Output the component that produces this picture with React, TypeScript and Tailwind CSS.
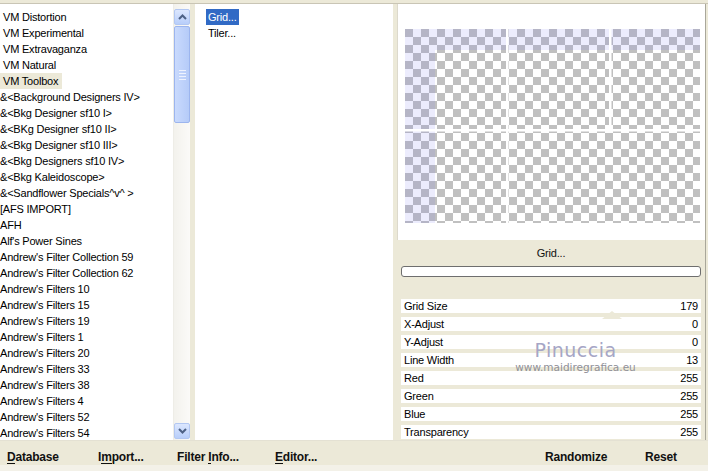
import React from "react";

const leftItems: { t: string; indent?: boolean; sel?: boolean }[] = [
  { t: "VM Distortion", indent: true },
  { t: "VM Experimental", indent: true },
  { t: "VM Extravaganza", indent: true },
  { t: "VM Natural", indent: true },
  { t: "VM Toolbox", indent: true, sel: true },
  { t: "&<Background Designers IV>" },
  { t: "&<Bkg Designer sf10 I>" },
  { t: "&<BKg Designer sf10 II>" },
  { t: "&<Bkg Designer sf10 III>" },
  { t: "&<Bkg Designers sf10 IV>" },
  { t: "&<Bkg Kaleidoscope>" },
  { t: "&<Sandflower Specials^v^ >" },
  { t: "[AFS IMPORT]" },
  { t: "AFH" },
  { t: "Alf's Power Sines" },
  { t: "Andrew's Filter Collection 59" },
  { t: "Andrew's Filter Collection 62" },
  { t: "Andrew's Filters 10" },
  { t: "Andrew's Filters 15" },
  { t: "Andrew's Filters 19" },
  { t: "Andrew's Filters 1" },
  { t: "Andrew's Filters 20" },
  { t: "Andrew's Filters 33" },
  { t: "Andrew's Filters 38" },
  { t: "Andrew's Filters 4" },
  { t: "Andrew's Filters 52" },
  { t: "Andrew's Filters 54" },
];

const params: [string, string][] = [
  ["Grid Size", "179"],
  ["X-Adjust", "0"],
  ["Y-Adjust", "0"],
  ["Line Width", "13"],
  ["Red", "255"],
  ["Green", "255"],
  ["Blue", "255"],
  ["Transparency", "255"],
];

function Chevron({ down }: { down?: boolean }) {
  return (
    <svg width="9" height="6" viewBox="0 0 9 6">
      <path
        d={down ? "M1 1 L4.5 4.5 L8 1" : "M1 5 L4.5 1.5 L8 5"}
        fill="none"
        stroke="#4D6185"
        strokeWidth="2"
      />
    </svg>
  );
}

function ScrollButton({ down }: { down?: boolean }) {
  return (
    <div className="h-[16px] w-[16px] mx-auto rounded-[2px] border border-[#B2C7F2] bg-gradient-to-b from-[#DCE7FE] to-[#B8CEFA] flex items-center justify-center">
      <Chevron down={down} />
    </div>
  );
}

function Checker() {
  return (
    <svg width="295" height="194" viewBox="0 0 295 194" className="block">
      <defs>
        <pattern id="chk" width="16" height="16" patternUnits="userSpaceOnUse">
          <rect width="16" height="16" fill="#FFFFFF" />
          <rect x="0" y="0" width="8" height="8" fill="#C0C0C0" />
          <rect x="8" y="8" width="8" height="8" fill="#C0C0C0" />
        </pattern>
      </defs>
      <rect width="295" height="194" fill="url(#chk)" />
      <rect x="0" y="0" width="295" height="21" fill="#6E6EF0" opacity="0.13" />
      <rect x="0" y="21" width="30" height="173" fill="#6E6EF0" opacity="0.13" />
      <rect x="101" y="0" width="2.5" height="194" fill="#FFFFFF" />
      <rect x="204" y="0" width="2.5" height="100" fill="#FFFFFF" />
      <rect x="0" y="100" width="295" height="2.5" fill="#FFFFFF" />
    </svg>
  );
}

function BottomBtn({ pre, u, post, className }: { pre: string; u: string; post: string; className?: string }) {
  return (
    <span className={"font-bold text-[12px] leading-[14px] text-[#111] whitespace-nowrap " + (className ?? "")}>
      {pre}
      {u ? <span className="inline-block border-b border-[#111] leading-[12px]">{u}</span> : null}
      {post}
    </span>
  );
}

export default function App() {
  return (
    <div className="w-[708px] h-[471px] bg-[#ECE9D8] flex flex-col overflow-hidden font-['Liberation_Sans',Arial,sans-serif] text-[11px] tracking-[-0.2px] text-black">
      {/* top strip */}
      <div className="h-[4px] shrink-0 border-b border-[#C9C5B5] bg-[#ECE9D8]" />

      {/* main */}
      <div className="h-[436px] flex shrink-0">
        {/* left list */}
        <div className="w-[173px] bg-white pt-[5px] overflow-hidden">
          {leftItems.map((it, i) => (
            <div key={i} className="h-[16px] leading-[16px] whitespace-nowrap">
              <span className={(it.indent ? "pl-[3px] " : "") + (it.sel ? "bg-[#ECE9D8] pr-[4px] inline-block h-[16px]" : "")}>
                {it.t}
              </span>
            </div>
          ))}
        </div>
        {/* scrollbar */}
        <div className="w-[17px] bg-gradient-to-r from-[#F3F2ED] to-[#FBFAF8] pt-[5px] pb-[1px] flex flex-col border-l border-[#EEEDE7]">
          <ScrollButton />
          <div className="h-[97px] w-[16px] mx-auto mt-[1px] rounded-[2px] border border-[#9CB5EE] bg-gradient-to-r from-[#C9DAFD] to-[#B5CBF8] flex flex-col items-center justify-center gap-[2px]">
            <div className="w-[7px] h-[1px] bg-[#EEF3FE]" />
            <div className="w-[7px] h-[1px] bg-[#EEF3FE]" />
            <div className="w-[7px] h-[1px] bg-[#EEF3FE]" />
            <div className="w-[7px] h-[1px] bg-[#EEF3FE]" />
          </div>
          <div className="flex-1" />
          <ScrollButton down />
        </div>
        <div className="w-[5px]" />
        {/* middle list */}
        <div className="w-[198px] bg-white pt-[5px] pl-[11px]">
          <div className="h-[16px] leading-[16px]">
            <span className="bg-[#316AC5] text-white inline-block h-[16px] px-[2px]">Grid...</span>
          </div>
          <div className="h-[16px] leading-[16px] pl-[2px]">Tiler...</div>
        </div>
        <div className="w-[4px]" />
        {/* right panel */}
        <div className="w-[309px] flex flex-col border-r border-[#A9A79A] relative">
          <div className="h-[236px] bg-white border-l border-[#DCD9CC] pl-[7px] pt-[25px]">
            <Checker />
          </div>
          <div className="h-[58px] flex flex-col px-[4px]">
            <div className="h-[26px] flex items-center justify-center text-[#111]">Grid...</div>
            <div className="h-[11px] rounded-[3px] border border-[#6E6E6E] bg-white" />
          </div>
          <div className="flex flex-col px-[4px]">
            {params.map(([k, v], i) => (
              <div key={k} className={"h-[14px] bg-white flex items-center justify-between px-[3px] leading-[14px] " + (i === 0 ? "mt-[1px]" : "mt-[4px]")}>
                <span>{k}</span>
                <span>{v}</span>
              </div>
            ))}
          </div>
          {/* slider pointer */}
          <svg className="absolute left-[205px] top-[307px]" width="20" height="8" viewBox="0 0 20 8">
            <path d="M0 8 L10 0 L20 8 Z" fill="#ECE9D8" />
          </svg>
          {/* watermark */}
          <div className="absolute left-[116px] top-[335px] w-[125px] flex flex-col items-center pointer-events-none">
            <span className="font-['DejaVu_Sans',sans-serif] text-[19px] leading-[22px] tracking-[0.5px] text-[#A6A6C6]">Pinuccia</span>
            <span className="font-['DejaVu_Sans',sans-serif] text-[10.5px] leading-[12px] text-[#909098] tracking-[0px]">www.maidiregrafica.eu</span>
          </div>
        </div>
        <div className="w-[2px]" />
      </div>

      {/* bottom bar */}
      <div className="flex-1 relative border-t border-[#E4E1D3]">
        <BottomBtn pre="" u="D" post="atabase" className="absolute left-[7px] top-[9px]" />
        <BottomBtn pre="I" u="m" post="port..." className="absolute left-[98px] top-[9px]" />
        <BottomBtn pre="Filter " u="I" post="nfo..." className="absolute left-[177px] top-[9px]" />
        <BottomBtn pre="" u="E" post="ditor..." className="absolute left-[275px] top-[9px]" />
        <BottomBtn pre="Randomize" u="" post="" className="absolute left-[545px] top-[9px]" />
        <BottomBtn pre="Reset" u="" post="" className="absolute left-[645px] top-[9px]" />
        <div className="absolute left-0 right-0 bottom-0 h-[6px] bg-[#F3F1E8]" />
      </div>
    </div>
  );
}
